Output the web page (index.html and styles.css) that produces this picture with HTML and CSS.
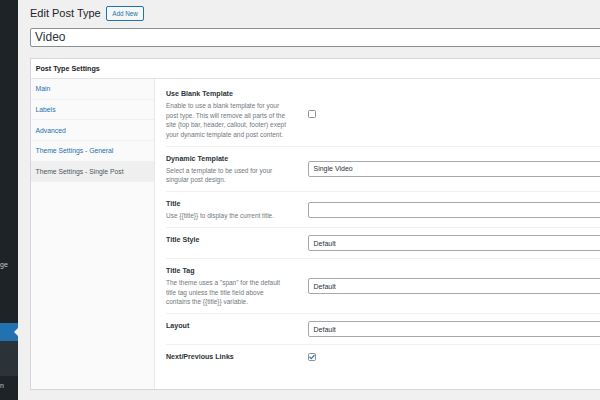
FILE: index.html
```html
<!DOCTYPE html>
<html lang="en">
<head>
<meta charset="utf-8">
<title>Edit Post Type</title>
<link rel="stylesheet" href="styles.css">
</head>
<body>
<div class="admin">
  <aside class="adminmenu">
    <div class="menu-gap-top"></div>
    <div class="menu-label">ge</div>
    <div class="menu-gap"></div>
    <div class="menu-current"></div>
    <div class="submenu"></div>
    <div class="menu-label menu-label-last">n</div>
  </aside>
  <main class="content">
    <div class="page-head">
      <h1 class="page-title">Edit Post Type</h1>
      <a class="btn">Add New</a>
    </div>
    <div class="title-input">Video</div>
    <section class="panel">
      <header class="panel-head">Post Type Settings</header>
      <div class="panel-body">
        <nav class="tabs">
          <div class="tab">Main</div>
          <div class="tab">Labels</div>
          <div class="tab">Advanced</div>
          <div class="tab">Theme Settings - General</div>
          <div class="tab active">Theme Settings - Single Post</div>
        </nav>
        <div class="fields">
          <div class="row">
            <div class="label-cell">
              <div class="label">Use Blank Template</div>
              <p class="desc">Enable to use a blank template for your<br>post type. This will remove all parts of the<br>site (top bar, header, callout, footer) exept<br>your dynamic template and post content.</p>
            </div>
            <div class="field-cell"><span class="checkbox"></span></div>
          </div>
          <div class="row">
            <div class="label-cell">
              <div class="label">Dynamic Template</div>
              <p class="desc">Select a template to be used for your<br>singular post design.</p>
            </div>
            <div class="field-cell"><div class="select">Single Video</div></div>
          </div>
          <div class="row">
            <div class="label-cell">
              <div class="label">Title</div>
              <p class="desc">Use {{title}} to display the current title.</p>
            </div>
            <div class="field-cell"><div class="select"></div></div>
          </div>
          <div class="row">
            <div class="label-cell">
              <div class="label">Title Style</div>
            </div>
            <div class="field-cell"><div class="select">Default</div></div>
          </div>
          <div class="row">
            <div class="label-cell">
              <div class="label">Title Tag</div>
              <p class="desc">The theme uses a "span" for the default<br>title tag unless the title field above<br>contains the {{title}} variable.</p>
            </div>
            <div class="field-cell"><div class="select">Default</div></div>
          </div>
          <div class="row">
            <div class="label-cell">
              <div class="label">Layout</div>
            </div>
            <div class="field-cell"><div class="select">Default</div></div>
          </div>
          <div class="row row-last">
            <div class="label-cell">
              <div class="label">Next/Previous Links</div>
            </div>
            <div class="field-cell">
              <span class="checkbox checked">
                <svg viewBox="0 0 8 8" width="8" height="8"><path d="M1.8 4.2 L3.3 5.7 L6.3 2.2" fill="none" stroke="#2271b1" stroke-width="1.2" stroke-linecap="round" stroke-linejoin="round"/></svg>
              </span>
            </div>
          </div>
        </div>
      </div>
    </section>
  </main>
</div>
</body>
</html>
```
FILE: styles.css
```css
html, body {
  margin: 0;
  padding: 0;
}
body {
  font-family: "Liberation Sans", Arial, sans-serif;
  background: #f0f0f1;
  width: 600px;
  height: 400px;
  overflow: hidden;
}
.admin {
  display: flex;
  height: 400px;
}
.adminmenu {
  width: 18px;
  flex: none;
  background: #1d2327;
  display: flex;
  flex-direction: column;
  overflow: hidden;
}
.menu-gap-top { height: 259px; }
.menu-label {
  height: 12px;
  line-height: 12px;
  font-size: 7px;
  color: #c3c4c7;
  white-space: nowrap;
}
.menu-gap { height: 52px; }
.menu-current {
  height: 18px;
  background: #2271b1;
  position: relative;
}
.menu-current::after {
  content: "";
  position: absolute;
  right: 0;
  top: 4.5px;
  border-top: 4.5px solid transparent;
  border-bottom: 4.5px solid transparent;
  border-right: 4px solid #f0f0f1;
}
.submenu {
  height: 35px;
  background: #2c3338;
}
.menu-label-last { margin-top: 4px; }

.content {
  flex: 1;
  min-width: 0;
  padding: 6px 0 0 12px;
  overflow: hidden;
}
.page-head {
  display: flex;
  align-items: center;
  gap: 5.5px;
  height: 14.5px;
}
.page-title {
  margin: 0;
  font-size: 11px;
  font-weight: 400;
  line-height: 14px;
  color: #1d2327;
}
.btn {
  display: flex;
  align-items: center;
  height: 14.5px;
  box-sizing: border-box;
  padding: 0 5px;
  border: 1px solid #2271b1;
  border-radius: 2px;
  background: #f6f7f7;
  color: #2271b1;
  font-size: 6.3px;
}
.title-input {
  margin-top: 7.5px;
  width: 700px;
  height: 18.5px;
  box-sizing: border-box;
  border: 1px solid #8c8f94;
  border-radius: 2px;
  background: #fff;
  padding-left: 4px;
  display: flex;
  align-items: center;
  font-size: 12px;
  color: #2c3338;
}
.panel {
  margin-top: 11.5px;
  width: 700px;
  height: 332px;
  box-sizing: border-box;
  border: 1px solid #d5d6d8;
  background: #fff;
  display: flex;
  flex-direction: column;
}
.panel-head {
  height: 19px;
  flex: none;
  border-bottom: 1px solid #e2e3e5;
  padding-left: 4.7px;
  display: flex;
  align-items: center;
  font-size: 7.2px;
  font-weight: 700;
  color: #1d2327;
}
.panel-body {
  flex: 1;
  display: flex;
}
.tabs {
  width: 123px;
  flex: none;
  background: #fafafa;
  border-right: 1px solid #e8e8e8;
  display: flex;
  flex-direction: column;
}
.tab {
  height: 19.7px;
  border-bottom: 1px solid #f0f0f0;
  padding-left: 4.5px;
  display: flex;
  align-items: center;
  font-size: 6.8px;
  color: #2271b1;
}
.tab.active {
  background: #efefef;
  color: #50575e;
}
.fields {
  flex: 1;
  padding: 3px 0 0 11px;
}
.row {
  display: flex;
  border-bottom: 1px solid #f0f0f1;
}
.row-last { border-bottom: none; }
.label-cell {
  width: 142px;
  flex: none;
  box-sizing: border-box;
  padding: 7px 0 6.5px;
}
.label {
  font-size: 7.1px;
  font-weight: 700;
  line-height: 10px;
  color: #2c3338;
}
.desc {
  margin: 2px 0 0;
  font-size: 6.5px;
  line-height: 9.5px;
  color: #72777c;
  white-space: nowrap;
}
.field-cell {
  flex: 1;
  padding: 7px 0;
  display: flex;
  align-items: center;
}
.select {
  width: 400px;
  height: 16px;
  box-sizing: border-box;
  border: 1px solid #a7aaad;
  border-radius: 2px;
  background: #fff;
  padding-left: 4.5px;
  display: flex;
  align-items: center;
  font-size: 7px;
  color: #2c3338;
}
.checkbox {
  width: 8px;
  height: 8px;
  box-sizing: border-box;
  border: 1px solid #8c8f94;
  border-radius: 1.5px;
  background: #fff;
  display: flex;
  align-items: center;
  justify-content: center;
}
.checkbox svg {
  display: block;
  flex: none;
}
```
